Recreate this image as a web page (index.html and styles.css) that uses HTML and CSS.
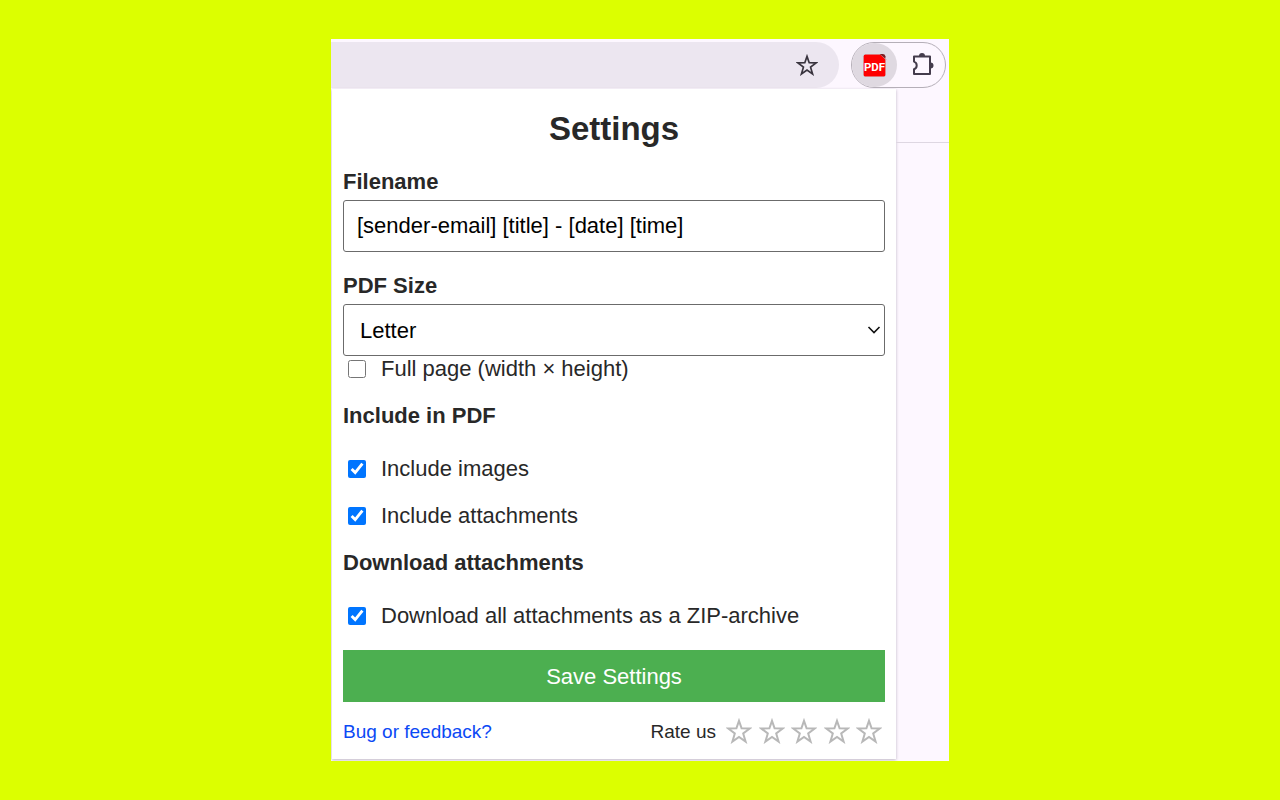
FILE: index.html
```html
<!DOCTYPE html>
<html lang="en">

<head>
    <meta charset="UTF-8">
    <meta name="viewport" content="width=device-width, initial-scale=1.0">
    <title>Settings</title>
    <link rel="stylesheet" href="styles.css">
</head>

<body>
    <svg class="symbols" aria-hidden="true">
        <symbol id="star" viewBox="0 0 26 26">
            <path d="M13 2.8 15.6 10.3 23.8 10.5 17.2 15.5 19.6 23.6 13 18.9 6.4 23.6 8.8 15.5 2.2 10.5 10.4 10.3Z" />
        </symbol>
    </svg>
    <div class="browser">
        <header class="toolbar">
            <div class="address-bar">
                <button class="icon-button" type="button" aria-label="Bookmark this page">
                    <svg class="bookmark-icon"><use href="#star" /></svg>
                </button>
            </div>
            <div class="extensions">
                <button class="icon-button extension-active" type="button" aria-label="Save as PDF">
                    <svg class="pdf-icon" viewBox="0 0 24 24">
                        <path d="M3 1H18L23 6V21Q23 23 21 23H3Q1 23 1 21V3Q1 1 3 1Z" fill="#fe0000" stroke="#cde4ea" />
                        <path d="M17 1 22.5 5.5V3Q22 1 20 1Z" fill="#7c1d22" />
                        <text x="12" y="17" text-anchor="middle">PDF</text>
                    </svg>
                </button>
                <button class="icon-button" type="button" aria-label="Extensions">
                    <svg class="puzzle-icon" viewBox="-2 0 26 26">
                        <path class="puzzle-body" d="M4 4.5H20V22H4V17.2C7.6 16 7.6 10.8 4 9.6Z" />
                        <path class="puzzle-knob" d="M9 4A3 3 0 0 1 15 4ZM20.5 10.5A3 3 0 0 1 20.5 16.5Z" />
                    </svg>
                </button>
            </div>
        </header>
        <div class="content">
            <main class="popup">
                <h1>Settings</h1>
                <form>
                    <div class="field">
                        <label for="filename">Filename</label>
                        <input type="text" id="filename" value="[sender-email] [title] - [date] [time]">
                    </div>
                    <div class="field">
                        <label for="size">PDF Size</label>
                        <div class="select-cont">
                            <select id="size">
                                <option>Letter</option>
                                <option>A4</option>
                            </select>
                            <svg class="chevron" viewBox="0 0 14 10"><path d="M1.5 2 7 7.5 12.5 2" /></svg>
                        </div>
                    </div>
                    <label class="check"><input type="checkbox"> Full page (width × height)</label>
                    <h2>Include in PDF</h2>
                    <div class="checks">
                        <label class="check"><input type="checkbox" checked> Include images</label>
                        <label class="check"><input type="checkbox" checked> Include attachments</label>
                    </div>
                    <h2>Download attachments</h2>
                    <label class="check"><input type="checkbox" checked> Download all attachments as a ZIP-archive</label>
                    <button class="save" type="submit">Save Settings</button>
                </form>
                <footer>
                    <a href="#">Bug or feedback?</a>
                    <div class="rating">
                        <span>Rate us</span>
                        <div class="stars">
                            <button class="icon-button" type="button" aria-label="1 star"><svg class="rate-icon"><use href="#star" /></svg></button>
                            <button class="icon-button" type="button" aria-label="2 stars"><svg class="rate-icon"><use href="#star" /></svg></button>
                            <button class="icon-button" type="button" aria-label="3 stars"><svg class="rate-icon"><use href="#star" /></svg></button>
                            <button class="icon-button" type="button" aria-label="4 stars"><svg class="rate-icon"><use href="#star" /></svg></button>
                            <button class="icon-button" type="button" aria-label="5 stars"><svg class="rate-icon"><use href="#star" /></svg></button>
                        </div>
                    </div>
                </footer>
            </main>
            <div class="page-edge"></div>
        </div>
    </div>
</body>

</html>
```
FILE: styles.css
```css
* {
    box-sizing: border-box;
}

body {
    margin: 0;
    min-height: 100vh;
    display: flex;
    align-items: center;
    justify-content: center;
    background-color: #dcff00;
    color: #282828;
    font-family: "Liberation Sans", Arial, sans-serif;
    font-size: 22px;
    line-height: 25px;
}

.symbols {
    position: absolute;
    width: 0;
    height: 0;
}

.browser {
    width: 100%;
    max-width: 618px;
    background-color: #fdf7ff;
    overflow: hidden;
}

/* toolbar */

.toolbar {
    display: flex;
    gap: 12px;
    padding: 3px 3px 1px 0;
}

.address-bar {
    flex-grow: 1;
    display: flex;
    align-items: center;
    justify-content: flex-end;
    padding-right: 21px;
    border-radius: 0 23px 23px 0;
    background-color: #ece6f0;
}

.icon-button {
    display: flex;
    align-items: center;
    justify-content: center;
    padding: 0;
    border: none;
    background: none;
    cursor: pointer;
}

.bookmark-icon {
    width: 22px;
    height: 22px;
    fill: none;
    stroke: #39343e;
    stroke-width: 2;
}

.extensions {
    display: flex;
    width: 95px;
    height: 46px;
    border: 1px solid #b5afb8;
    border-radius: 23px;
    overflow: hidden;
}

.extensions .icon-button {
    flex: 1;
}

.extensions .extension-active {
    flex: 0 0 45px;
    border-radius: 0 23px 23px 0;
    background-color: #dfd9e1;
}

.pdf-icon {
    width: 25px;
    height: 25px;
}

.pdf-icon text {
    fill: #ffffff;
    font-family: Roboto, sans-serif;
    font-size: 11px;
    font-weight: 700;
}

.puzzle-icon {
    width: 26px;
    height: 26px;
}

.puzzle-body {
    fill: none;
    stroke: #443c4c;
    stroke-width: 2;
    stroke-linejoin: round;
}

.puzzle-knob {
    fill: #443c4c;
}

/* popup */

.content {
    display: flex;
    padding: 0 0 2px 1px;
}

.popup {
    flex-grow: 1;
    padding: 21px 11px 15px;
    background-color: #ffffff;
    box-shadow: 0 1px 3px #bdb5c4;
}

.page-edge {
    width: 53px;
    height: 54px;
    border-bottom: 1px solid #ded7e2;
}

h1 {
    margin: 0 0 21px;
    font-size: 33px;
    line-height: 38px;
    text-align: center;
}

h2 {
    margin: 22px 0 28px;
    font-size: 22px;
}

.field {
    display: flex;
    flex-direction: column;
    gap: 6px;
}

.field + .field {
    margin-top: 21px;
}

.field label {
    font-weight: bold;
}

.field input,
.field select {
    width: 100%;
    height: 52px;
    border: 1px solid #6b6b6b;
    border-radius: 3px;
    background-color: #ffffff;
    color: #000000;
    font: inherit;
}

.field input {
    padding: 0 13px;
}

.field select {
    appearance: none;
    padding: 0 16px;
}

.select-cont {
    position: relative;
    display: flex;
}

.chevron {
    position: absolute;
    top: 21px;
    right: 4px;
    width: 14px;
    height: 10px;
    fill: none;
    stroke: #111111;
    stroke-width: 1.6;
    pointer-events: none;
}

.checks {
    display: flex;
    flex-direction: column;
    gap: 22px;
}

.check {
    display: flex;
    align-items: center;
    gap: 15px;
}

.check input {
    width: 18px;
    height: 18px;
    margin: 0 0 0 5px;
    accent-color: #0075ff;
}

.save {
    width: 100%;
    height: 52px;
    margin: 22px 0 16px;
    border: none;
    background-color: #4caf50;
    color: #ffffff;
    font: inherit;
    cursor: pointer;
}

footer {
    display: flex;
    align-items: center;
    justify-content: space-between;
    font-size: 19px;
}

footer a {
    color: #0b49f5;
    text-decoration: none;
}

.rating {
    display: flex;
    align-items: center;
    gap: 10px;
    padding-right: 3px;
}

.stars {
    display: flex;
    justify-content: space-between;
    width: 156px;
}

.rate-icon {
    width: 26px;
    height: 26px;
    fill: none;
    stroke: #b8b8b8;
    stroke-width: 2;
}
```
